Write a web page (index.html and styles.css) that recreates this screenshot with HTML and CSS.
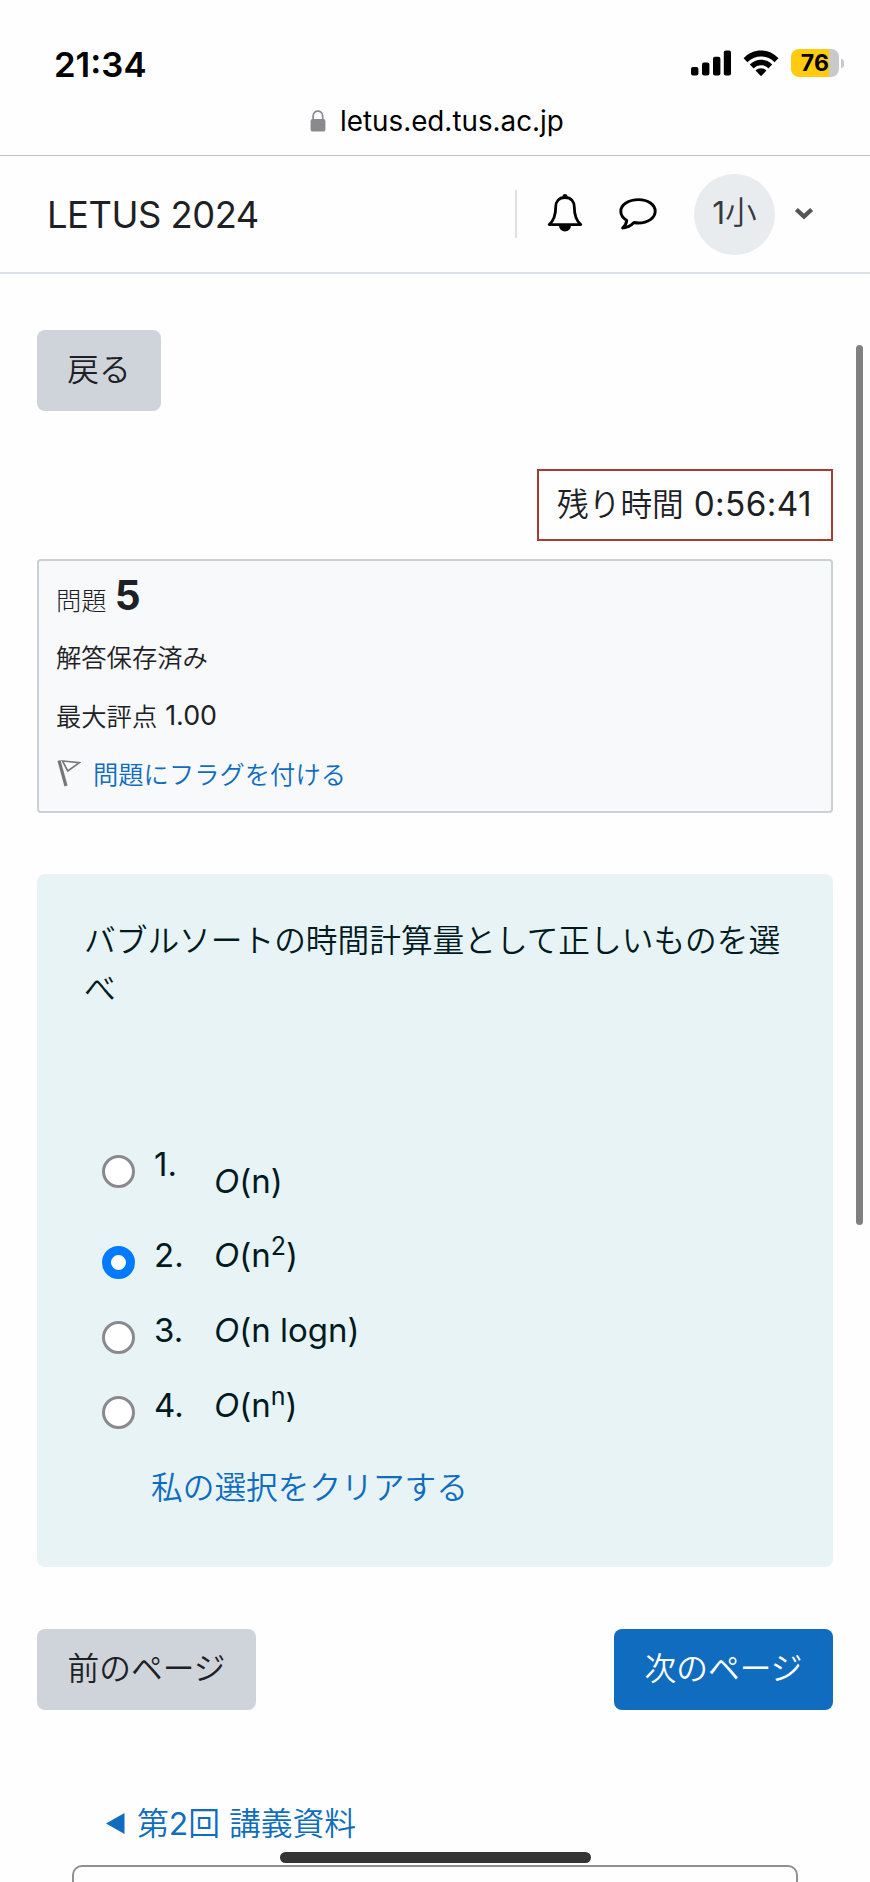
FILE: index.html
```html
<!DOCTYPE html>
<html lang="ja">
<head>
<meta charset="utf-8">
<title>LETUS 2024</title>
<link rel="stylesheet" href="styles.css">
</head>
<body>
<div class="screen">
  <div class="status">
    <span class="clock">21:34</span>
    <div class="status-icons">
      <svg class="signal" width="40" height="26" viewBox="0 0 40 26"><rect x="0" y="17" width="7.4" height="8.6" rx="2"/><rect x="11" y="12.6" width="7.4" height="13" rx="2"/><rect x="22" y="6.8" width="7.4" height="18.8" rx="2"/><rect x="32.8" y="0.6" width="7.2" height="25" rx="2"/></svg>
      <svg class="wifi" width="36" height="26" viewBox="0 0 36 26"><path d="M0.6 8.2C10-2.1 26-2.1 35.4 8.2L31.6 12.2C24.2 4.6 11.8 4.6 4.4 12.2Z"/><path d="M6.8 14.5C12.9 8.1 23.1 8.1 29.2 14.5L25.3 18.4C21.3 14.3 14.7 14.3 10.7 18.4Z"/><path d="M12.5 20.6C15.6 17.5 20.4 17.5 23.5 20.6L18 26.2Z"/></svg>
      <span class="battery"><span class="battery-body">76</span><span class="battery-tip"></span></span>
    </div>
  </div>
  <div class="address">
    <svg width="16" height="22" viewBox="0 0 16 22"><path d="M3.1 10V6.2C3.1 -.5 12.7 -.5 12.7 6.2V10" fill="none" stroke="#8a898e" stroke-width="1.7"/><rect x=".6" y="9" width="14.8" height="12.6" rx="2.2" fill="#8a898e"/></svg>
    <span>letus.ed.tus.ac.jp</span>
  </div>
  <header class="navbar">
    <span class="brand">LETUS 2024</span>
    <span class="divider"></span>
    <svg class="bell" width="36" height="38" viewBox="0 0 36 38"><path d="M18 3.5C11.5 3.5 8.7 8 8.7 13C8.7 22 7 26.5 2.2 30.6H33.8C29 26.5 27.3 22 27.3 13C27.3 8 24.5 3.5 18 3.5Z" fill="none" stroke="#000" stroke-width="2.8" stroke-linejoin="round"/><circle cx="18" cy="2.6" r="2.5"/><path d="M12 31.5A6 6 0 0 0 24 31.5Z"/></svg>
    <svg class="chat" width="40" height="34" viewBox="0 0 40 34"><path d="M20.5 2.6C30 2.6 37.2 7.7 37.2 14.3S30 26 20.5 26C18.8 26 17.5 25.8 16 25.5C13 28.6 9.5 30.6 4.6 31C7 28.9 8.4 26.7 8.7 23.5C5 21.2 2.8 18 2.8 14.3C2.8 7.7 10.5 2.6 20.5 2.6Z" fill="none" stroke="#000" stroke-width="2.9" stroke-linejoin="round"/></svg>
    <span class="avatar"><span class="latin">1</span>小</span>
    <svg class="caret" width="20" height="14" viewBox="0 0 20 14"><path d="M2.4 2.5L10 9.5L17.6 2.5" fill="none" stroke="#555" stroke-width="4.4"/></svg>
  </header>
  <main class="content">
    <button class="btn btn-back">戻る</button>
    <div class="timer-row"><div class="timer">残り時間 <span class="time">0:56:41</span></div></div>
    <section class="info">
      <h3 class="info-no">問題 <b>5</b></h3>
      <div class="info-line">解答保存済み</div>
      <div class="info-line grade">最大評点 <span class="latin">1.00</span></div>
      <a class="info-line flag">
        <svg width="25" height="28" viewBox="0 0 25 28"><path d="M3 1.5L10 27" fill="none" stroke="#777" stroke-width="3.2"/><path d="M6.5 2L23.500 3.6L11.800 12Z" fill="#fff" stroke="#777" stroke-width="1.7"/></svg>
        <span>問題にフラグを付ける</span>
      </a>
    </section>
    <section class="question">
      <p class="qtext">バブルソートの時間計算量として正しいものを選べ</p>
      <div class="answers">
        <div class="answer first"><i class="radio"></i><span class="num">1.</span><span class="label"><em>O</em>(n)</span></div>
        <div class="answer"><i class="radio checked"></i><span class="num">2.</span><span class="label"><em>O</em>(n<sup>2</sup>)</span></div>
        <div class="answer"><i class="radio"></i><span class="num">3.</span><span class="label"><em>O</em>(n logn)</span></div>
        <div class="answer"><i class="radio"></i><span class="num">4.</span><span class="label"><em>O</em>(n<sup>n</sup>)</span></div>
      </div>
      <a class="clear">私の選択をクリアする</a>
    </section>
    <div class="pager"><button class="btn">前のページ</button><button class="btn btn-primary">次のページ</button></div>
    <a class="prev-link"><svg width="19" height="21" viewBox="0 0 19 21"><path d="M0 10.5L18.5 0V21Z" fill="#0f6cbf"/></svg><span class="prev-text">第<span class="latin">2</span>回 講義資料</span></a>
    <div class="jump"></div>
  </main>
  <div class="scrollbar"></div>
  <div class="home"></div>
</div>
</body>
</html>
```
FILE: styles.css
```css
* { box-sizing: border-box; }
body {
  margin: 0;
  background: #fff;
  color: #1d2125;
  font-family: Inter, "Noto Sans CJK JP", sans-serif;
  font-weight: 400;
}
.screen {
  position: relative;
  width: 870px;
  height: 1882px;
  overflow: hidden;
  display: flex;
  flex-direction: column;
  background: #fefefe;
}
.screen > * { flex: none; }
.status {
  height: 96px;
  padding: 32px 26px 0 54px;
  display: flex;
  justify-content: space-between;
  color: #000;
}
.clock { font-size: 34.7px; font-weight: 600; line-height: 64px; }
.status-icons { display: flex; height: 62px; align-items: center; }
.wifi { margin-left: 12px; }
.battery { margin-left: 12px; display: flex; align-items: center; }
.battery-body {
  width: 48px;
  height: 28px;
  border-radius: 8px;
  background: linear-gradient(90deg, #fecb0e 38px, #c9c8cb 38px);
  font-size: 23px;
  font-weight: 650;
  line-height: 29px;
  text-align: center;
  letter-spacing: .2px;
}
.battery-tip { width: 3px; height: 9px; margin-left: 2px; border-radius: 0 4px 4px 0; background: #c9c8cb; }
.address {
  height: 60px;
  padding: 0 0 9px 310px;
  border-bottom: 1px solid #c0c0c0;
  display: flex;
  align-items: center;
  gap: 14px;
  font-size: 27.8px;
  color: #000;
}
.navbar {
  height: 118px;
  border-bottom: 2px solid #dee2e6;
  padding: 0 56px 0 47px;
  display: flex;
  align-items: center;
}
.brand { flex: 1; padding-top: 1px; font-size: 36.3px; letter-spacing: -.45px; }
.divider { width: 2px; height: 48px; background: #dee2e6; margin-right: 30px; }
.bell { margin-top: -2px; }
.chat { margin-left: 35px; }
.avatar {
  width: 81px;
  height: 81px;
  margin-left: 36px;
  border-radius: 50%;
  background: #e9ecef;
  color: #343a40;
  font-size: 31.7px;
  font-weight: 350;
  line-height: 78px;
  text-align: center;
}
.caret { margin-left: 19px; }
.content { padding: 56px 37px 0; }
.btn {
  display: block;
  height: 81px;
  padding: 0 29px 8px;
  border: 0;
  border-radius: 8px;
  background: #ced4da;
  color: #1d2125;
  font: 350 31.7px Inter, "Noto Sans CJK JP", sans-serif;
}
.btn-back { width: 124px; }
.btn-primary { background: #0f6cbf; color: #fff; }
.timer-row { display: flex; justify-content: flex-end; margin: 58px 0 18px; }
.timer {
  width: 296px;
  height: 72px;
  border: 2px solid #a83c32;
  padding-left: 18px;
  font-size: 31.7px;
  font-weight: 350;
  line-height: 66px;
  white-space: nowrap;
}
.time { font-size: 33.3px; font-weight: 400; letter-spacing: .4px; margin-left: 1px; }
.latin { font-weight: 400; }
.info {
  height: 254px;
  border: 2px solid #cad0d7;
  border-radius: 4px;
  background: #f8f9fb;
  padding: 9px 17px;
  font-size: 25.3px;
}
.info-no { margin: 0; height: 57px; font-size: 25.3px; font-weight: 300; line-height: 62px; }
.info-no b { font-size: 40.5px; line-height: 50px; font-weight: 700; margin-left: 1px; }
.info-line { display: flex; align-items: center; height: 58.5px; font-weight: 350; }
.grade { gap: 8px; }
.grade .latin { font-size: 26.8px; }
.flag { color: #0f6cbf; gap: 12px; }
.question {
  height: 693px;
  margin-top: 61px;
  border-radius: 8px;
  background: #e7f3f5;
  color: #001a1e;
  padding: 43px 47px 0;
}
.qtext { margin: 0; font-size: 31.7px; line-height: 47.5px; font-weight: 350; width: 702px; }
.answers { margin-top: 128px; padding-left: 18px; font-size: 33px; }
.answer { display: flex; height: 75px; line-height: 49px; }
.first { height: 91px; }
.radio {
  flex: none;
  width: 33px;
  height: 33px;
  margin-top: 15px;
  border: 3px solid #8a898e;
  border-radius: 50%;
  background: #fff;
}
.radio.checked { border: 9px solid #007aff; }
.num { width: 60px; margin-left: 19px; }
.label { white-space: nowrap; }
.first .label { padding-top: 17px; }
.label sup { font-size: 25px; line-height: 0; vertical-align: baseline; position: relative; top: -12px; }
.clear { display: block; margin: 8px 0 0 67px; font-size: 31.7px; line-height: 48px; font-weight: 350; color: #0f6cbf; }
.pager { display: flex; justify-content: space-between; margin-top: 62px; }
.pager .btn { width: 219px; }
.prev-link { display: flex; align-items: center; gap: 12px; margin: 89px 0 0 69px; height: 48px; font-size: 31.8px; font-weight: 350; color: #0f6cbf; }
.prev-text { padding-bottom: 4px; }
.jump { height: 60px; margin: 18px 35px 0; border: 2px solid #8f8f96; border-radius: 10px; }
.scrollbar { position: absolute; left: 856px; top: 345px; width: 7px; height: 880px; border-radius: 4px; background: #808080; }
.home { position: absolute; left: 280px; top: 1852px; width: 311px; height: 11px; border-radius: 6px; background: #333433; }
```
